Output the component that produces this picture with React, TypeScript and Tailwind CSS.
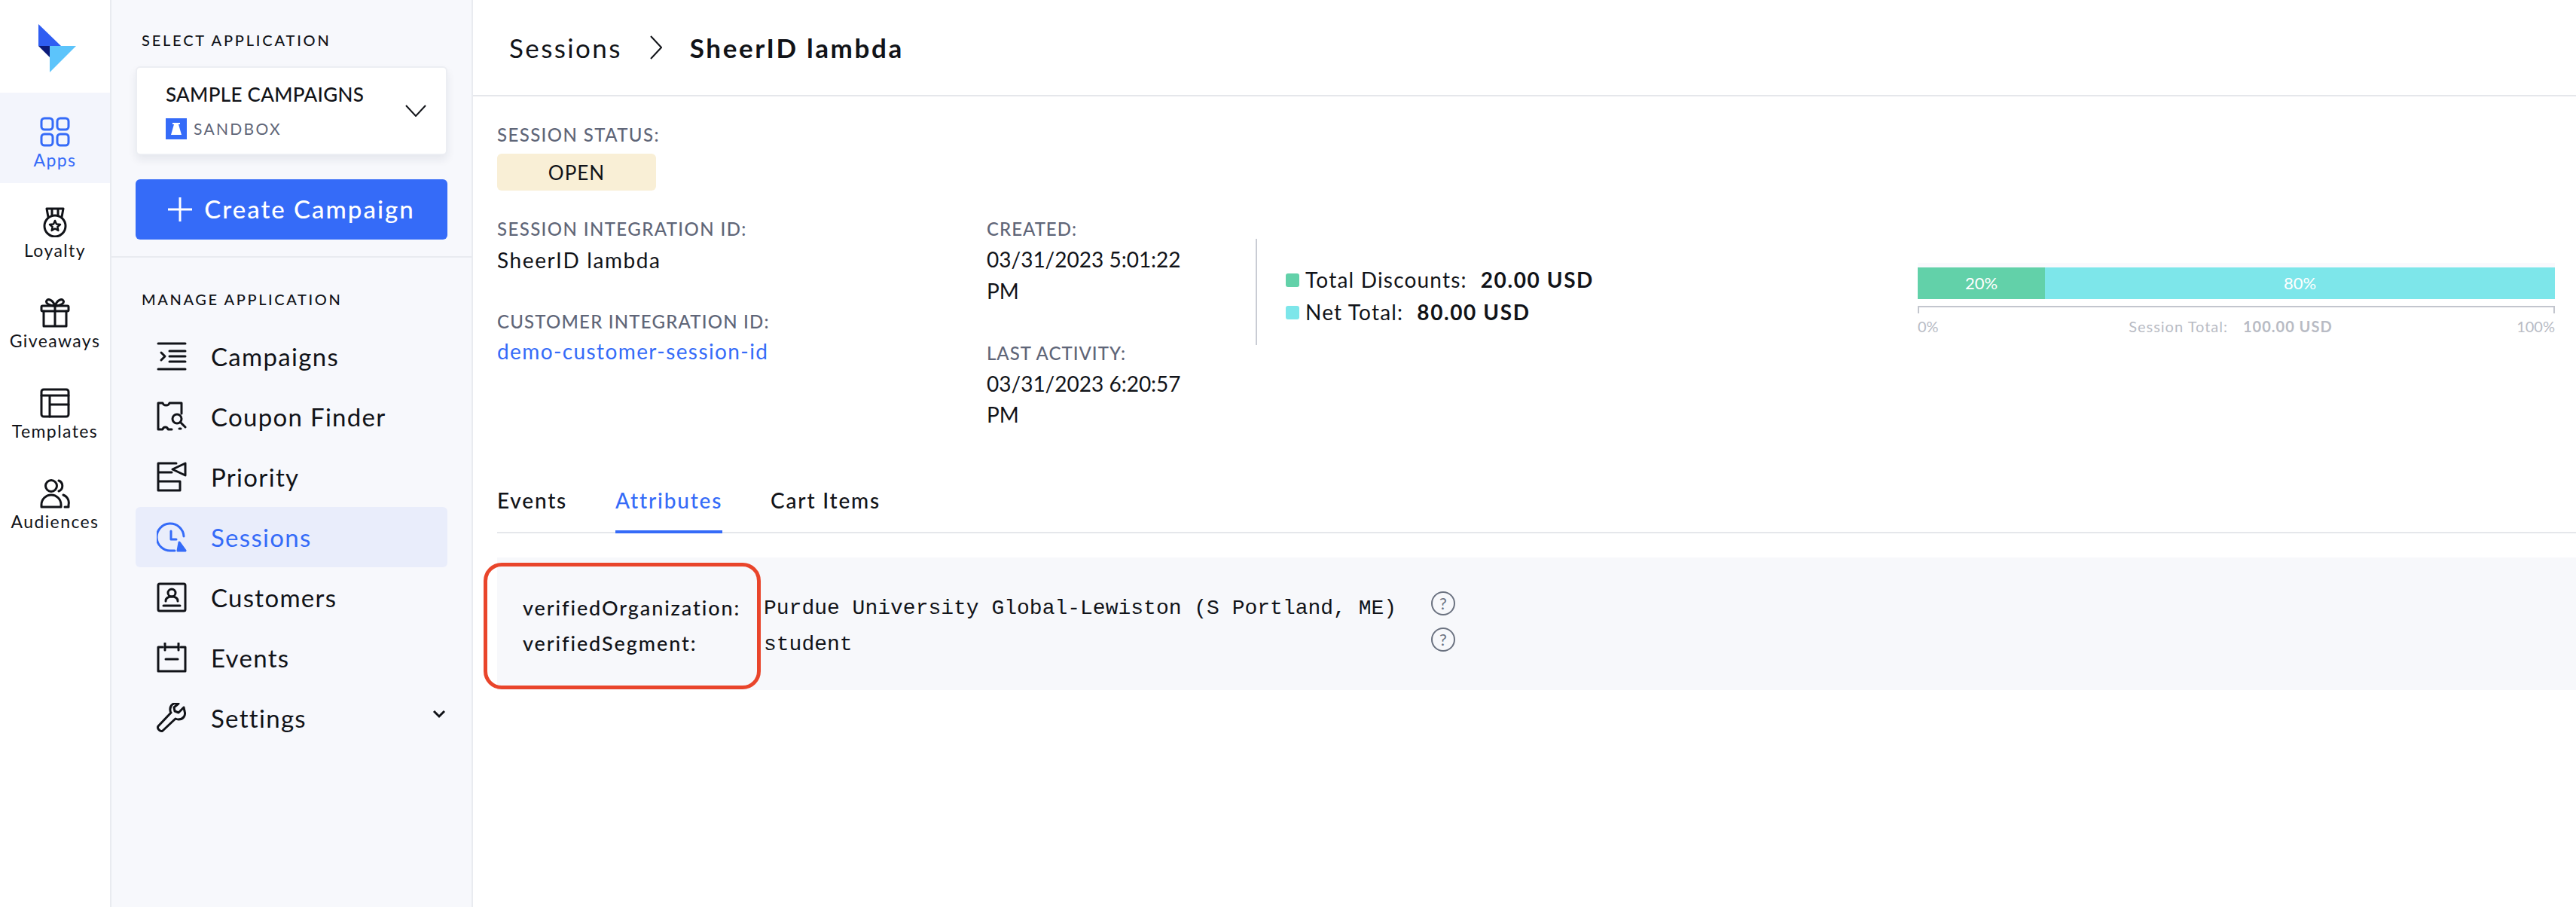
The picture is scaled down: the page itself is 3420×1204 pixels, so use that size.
import type { ReactNode } from "react";

const font = "font-['Lato','Noto_Sans',sans-serif]";

function Svg({ children, className }: { children: ReactNode; className?: string }) {
  return (
    <svg
      viewBox="0 0 40 40"
      fill="none"
      stroke="currentColor"
      strokeWidth="3"
      strokeLinecap="round"
      strokeLinejoin="round"
      className={className ?? "w-[40px] h-[40px] shrink-0"}
    >
      {children}
    </svg>
  );
}

function Logo() {
  return (
    <svg viewBox="0 0 50 64" className="w-[50px] h-[64px]">
      <path d="M0 0 L30 29 L0 29 Z" fill="#2f5df2" />
      <path d="M0 29 L15 29 L15 44 Z" fill="#0c1a7a" />
      <path d="M15 29 L50 29 L15 64 Z" fill="#5cc4fb" />
    </svg>
  );
}

const railItems = [
  {
    label: "Apps",
    active: true,
    icon: (
      <Svg>
        <rect x="2" y="2" width="15" height="15" rx="4" />
        <rect x="23" y="2" width="15" height="15" rx="4" />
        <rect x="2" y="23" width="15" height="15" rx="4" />
        <rect x="23" y="23" width="15" height="15" rx="4" />
      </Svg>
    ),
  },
  {
    label: "Loyalty",
    icon: (
      <Svg>
        <circle cx="20" cy="25" r="14" />
        <path d="M9 2h22M9 2l2 11M31 2l-2 11M16 2v8M24 2v8" />
        <path d="M20 18l2 4.500 5 .5-3.700 3.300 1 4.700-4.300-2.500-4.300 2.500 1-4.700L13 23l5-.5z" strokeWidth="2.500" />
      </Svg>
    ),
  },
  {
    label: "Giveaways",
    icon: (
      <Svg>
        <rect x="2" y="11" width="36" height="7" rx="1.500" />
        <path d="M5 18v20h30V18M20 11v27" />
        <path d="M20 11c-3-8-9-10-11-7s3 7 11 7zM20 11c3-8 9-10 11-7s-3 7-11 7z" />
      </Svg>
    ),
  },
  {
    label: "Templates",
    icon: (
      <Svg>
        <rect x="2" y="2" width="36" height="36" rx="3" />
        <path d="M2 10h36M13 10v28M13 22h25" />
      </Svg>
    ),
  },
  {
    label: "Audiences",
    icon: (
      <Svg>
        <circle cx="15" cy="10" r="7.500" />
        <path d="M25 3a7.500 7.500 0 0 1 0 14M2 38v-3a13 13 0 0 1 26 0v3zM31 22a11 11 0 0 1 7 13v3h-5" />
      </Svg>
    ),
  },
];

const menuItems = [
  {
    label: "Campaigns",
    icon: (
      <Svg>
        <path d="M2 3h36M17 13h21M17 20h21M17 27h21M2 37h36M6 15l5 5-5 5" />
      </Svg>
    ),
  },
  {
    label: "Coupon Finder",
    icon: (
      <Svg>
        <path d="M20 37h-5c-1-4-6-4-7 0H2V2h6c1 4 8 4 9 0h16v14" />
        <circle cx="27" cy="23" r="6" />
        <path d="M32 28l6 6M30 36h2" />
      </Svg>
    ),
  },
  {
    label: "Priority",
    icon: (
      <Svg>
        <path d="M26 2H2v36h29V26M2 14h18M2 26h29" />
        <path d="M38 2v16l-17-8z" />
      </Svg>
    ),
  },
  {
    label: "Sessions",
    active: true,
    icon: (
      <Svg>
        <path d="M24 38H19A18 18 0 1 1 36 19" />
        <path d="M19 12v11h7" />
        <path d="M30 27l8 11H28z" fill="currentColor" />
      </Svg>
    ),
  },
  {
    label: "Customers",
    icon: (
      <Svg>
        <rect x="2" y="2" width="36" height="36" rx="2" />
        <circle cx="20" cy="14" r="5" />
        <path d="M12 25c0-4 3-6 8-6s8 2 8 6M9 31h22" />
      </Svg>
    ),
  },
  {
    label: "Events",
    icon: (
      <Svg>
        <path d="M8 6H2v32h36V6h-6M11 6h18M11 1v9M29 1v9M12 22h16" />
      </Svg>
    ),
  },
  {
    label: "Settings",
    chevron: true,
    icon: (
      <Svg>
        <path d="M36 6l-7 7-5-2-1-5 6-5c-6-2-12 2-11 9 0 2 1 3 1 3L2 31c-2 3 3 8 6 6l17-16s2 1 4 1c6 0 10-5 8-11z" />
      </Svg>
    ),
  },
];

function Help() {
  return (
    <div className="w-[32px] h-[32px] rounded-full border-2 border-[#6b7280] flex items-center justify-center text-[22px] leading-none text-[#6b7280]">
      ?
    </div>
  );
}

export default function App() {
  return (
    <div className={`flex h-[1204px] overflow-hidden bg-white text-[#111318] ${font}`}>
      {/* app rail */}
      <aside className="w-[148px] shrink-0 border-r-2 border-[#e9ebf0] flex flex-col">
        <div className="h-[123px] pt-[32px] pl-[51px]">
          <Logo />
        </div>
        {railItems.map((item) => (
          <div
            key={item.label}
            className={`h-[120px] flex flex-col items-center pt-[32px] gap-[3px] ${
              item.active ? "bg-[#f3f5fc] text-[#356bf8]" : ""
            }`}
          >
            {item.icon}
            <span className="text-[23px] leading-[28px] tracking-[1.4px]">{item.label}</span>
          </div>
        ))}
      </aside>

      {/* application sidebar */}
      <aside className="w-[480px] shrink-0 bg-[#f7f8fc] border-r-2 border-[#e9ebf0] flex flex-col">
        <div className="h-[342px] border-b-2 border-[#e9ebf0] px-[32px] pt-[41px]">
          <div className="pl-[8px] text-[20px] leading-[24px] font-medium tracking-[2.8px]">SELECT APPLICATION</div>
          <div className="mt-[23px] h-[118px] bg-white rounded-[6px] border-2 border-[#eceef3] shadow-[0_6px_12px_rgba(30,40,70,0.08)] pl-[38px] pr-[26px] flex items-center justify-between">
            <div>
              <div className="text-[26px] leading-[32px] font-medium tracking-[0.3px]">SAMPLE CAMPAIGNS</div>
              <div className="mt-[16px] flex items-center gap-[9px]">
                <div className="w-[28px] h-[28px] bg-[#356bf8] flex items-center justify-center">
                  <svg viewBox="0 0 20 20" className="w-[20px] h-[20px]">
                    <path d="M5 2h10v2h-2l4 14H3L7 4H5z" fill="#fff" />
                  </svg>
                </div>
                <span className="text-[21px] leading-[28px] tracking-[2.3px] text-[#5f6678]">SANDBOX</span>
              </div>
            </div>
            <svg viewBox="0 0 28 16" className="w-[28px] h-[16px]" fill="none" stroke="#111318" strokeWidth="2">
              <path d="M1 1l13 14L27 1" />
            </svg>
          </div>
          <button className="mt-[32px] w-full h-[80px] bg-[#356bf8] rounded-[6px] text-white flex items-center justify-center gap-[16px] text-[33px] font-medium tracking-[2px]">
            <svg viewBox="0 0 32 32" className="w-[32px] h-[32px]" fill="none" stroke="#fff" strokeWidth="3">
              <path d="M16 0v32M0 16h32" />
            </svg>
            Create Campaign
          </button>
        </div>
        <div className="px-[32px] pt-[43px]">
          <div className="pl-[8px] text-[20px] leading-[24px] font-medium tracking-[2.6px]">MANAGE APPLICATION</div>
          <div className="mt-[24px]">
            {menuItems.map((item) => (
              <div
                key={item.label}
                className={`h-[80px] rounded-[6px] pl-[28px] pr-[2px] flex items-center gap-[32px] ${
                  item.active ? "bg-[#e9edfb] text-[#356bf8]" : ""
                }`}
              >
                {item.icon}
                <span className="flex-1 text-[33px] leading-[40px] tracking-[1.3px]">{item.label}</span>
                {item.chevron && (
                  <svg viewBox="0 0 18 12" className="w-[18px] h-[12px] -mt-[10px]" fill="none" stroke="#111318" strokeWidth="3">
                    <path d="M2 2l7 7 7-7" />
                  </svg>
                )}
              </div>
            ))}
          </div>
        </div>
      </aside>

      {/* main */}
      <main className="flex-1 min-w-0">
        <header className="h-[128px] border-b-2 border-[#e5e7eb] pl-[48px] flex items-center text-[35px] tracking-[2.4px]">
          <span>Sessions</span>
          <svg viewBox="0 0 16 32" className="w-[16px] h-[32px] mx-[37px]" fill="none" stroke="#111318" strokeWidth="2">
            <path d="M1 1l14 15L1 31" />
          </svg>
          <span className="font-bold tracking-[2.6px]">SheerID lambda</span>
        </header>

        <div className="pl-[32px]">
          <div className="pt-[35px] text-[24px] leading-[32px] text-[#5f6678] font-medium tracking-[1.4px]">SESSION STATUS:</div>
          <div className="mt-[9px] w-[211px] h-[49px] pt-[2px] rounded-[6px] bg-[#f9efd6] flex items-center justify-center text-[26px] tracking-[1px]">
            OPEN
          </div>

          <div className="mt-[35px] flex items-start h-[286px]">
            <div className="w-[650px] shrink-0">
              <div className="text-[24px] leading-[32px] text-[#5f6678] font-medium tracking-[1.4px]">SESSION INTEGRATION ID:</div>
              <div className="mt-[4px] text-[28px] leading-[42px] tracking-[1.6px]">SheerID lambda</div>
              <div className="mt-[45px] text-[24px] leading-[32px] text-[#5f6678] font-medium tracking-[1.2px]">CUSTOMER INTEGRATION ID:</div>
              <div className="mt-[2px] text-[28px] leading-[42px] text-[#356bf8] tracking-[1.4px]">demo-customer-session-id</div>
            </div>
            <div className="w-[358px] shrink-0">
              <div className="text-[24px] leading-[32px] text-[#5f6678] font-medium tracking-[1px]">CREATED:</div>
              <div className="mt-[3px] w-[300px] text-[28px] leading-[42px]">03/31/2023 5:01:22 PM</div>
              <div className="mt-[46px] text-[24px] leading-[32px] text-[#5f6678] font-medium tracking-[1px]">LAST ACTIVITY:</div>
              <div className="mt-[4px] w-[300px] text-[28px] leading-[41px]">03/31/2023 6:20:57 PM</div>
            </div>
            <div className="-ml-[1px] mt-[29px] h-[141px] border-l-2 border-[#c9ccd4] pl-[38px] pt-[33px] text-[28px] leading-[43px]">
              <div className="flex items-center gap-[8px]">
                <span className="w-[18px] h-[18px] rounded-[3px] bg-[#62d1a9]" />
                <span className="tracking-[1.2px]">Total Discounts:</span>
                <span className="ml-[10px] font-bold tracking-[1.6px]">20.00 USD</span>
              </div>
              <div className="flex items-center gap-[8px]">
                <span className="w-[18px] h-[18px] rounded-[3px] bg-[#7de6ea]" />
                <span className="tracking-[1.2px]">Net Total:</span>
                <span className="ml-[10px] font-bold tracking-[1.6px]">80.00 USD</span>
              </div>
            </div>
            <div className="ml-auto mr-[28px] mt-[61px] w-[846px]">
              <div className="h-[6px] bg-[#faf9fd]" />
              <div className="h-[42px] flex text-white text-[22px] leading-[42px] text-center">
                <div className="w-[20%] bg-[#62d1a9]">20%</div>
                <div className="flex-1 bg-[#7de6ea]">80%</div>
              </div>
              <div className="mt-[9px] h-[10px] border-t-2 border-x-2 border-[#c3c6ce]" />
              <div className="mt-[4px] flex justify-between text-[20px] leading-[26px] text-[#b8bbc4]">
                <span>0%</span>
                <span className="ml-[8px] tracking-[1px]">
                  Session Total:
                  <span className="ml-[20px] font-bold">100.00 USD</span>
                </span>
                <span>100%</span>
              </div>
            </div>
          </div>

          <div className="border-b-2 border-[#e5e7eb] h-[134px] pt-[70px]">
            <div className="flex gap-[64px] text-[28px] leading-[40px] font-medium tracking-[1.8px]">
              <div>Events</div>
              <div className="h-[64px] border-b-4 border-[#356bf8] text-[#356bf8] box-border">Attributes</div>
              <div>Cart Items</div>
            </div>
          </div>

          <div className="relative mt-[32px] h-[176px] bg-[#f7f8fb] pt-[44px] pl-[34px] flex">
            <div className="absolute -left-[18px] top-[7px] w-[368px] h-[168px] rounded-[24px] border-[5px] border-[#e9452b]" />
            <div className="w-[320px] text-[27px] leading-[47px] font-medium -mt-[1px] tracking-[1.9px]">
              <div>verifiedOrganization:</div>
              <div>verifiedSegment:</div>
            </div>
            <div className="w-[886px] font-['Liberation_Mono',monospace] text-[28px] leading-[48px]">
              <div>Purdue University Global-Lewiston (S Portland, ME)</div>
              <div>student</div>
            </div>
            <div className="flex flex-col gap-[16px] mt-[1px]">
              <Help />
              <Help />
            </div>
          </div>
        </div>
      </main>
    </div>
  );
}
